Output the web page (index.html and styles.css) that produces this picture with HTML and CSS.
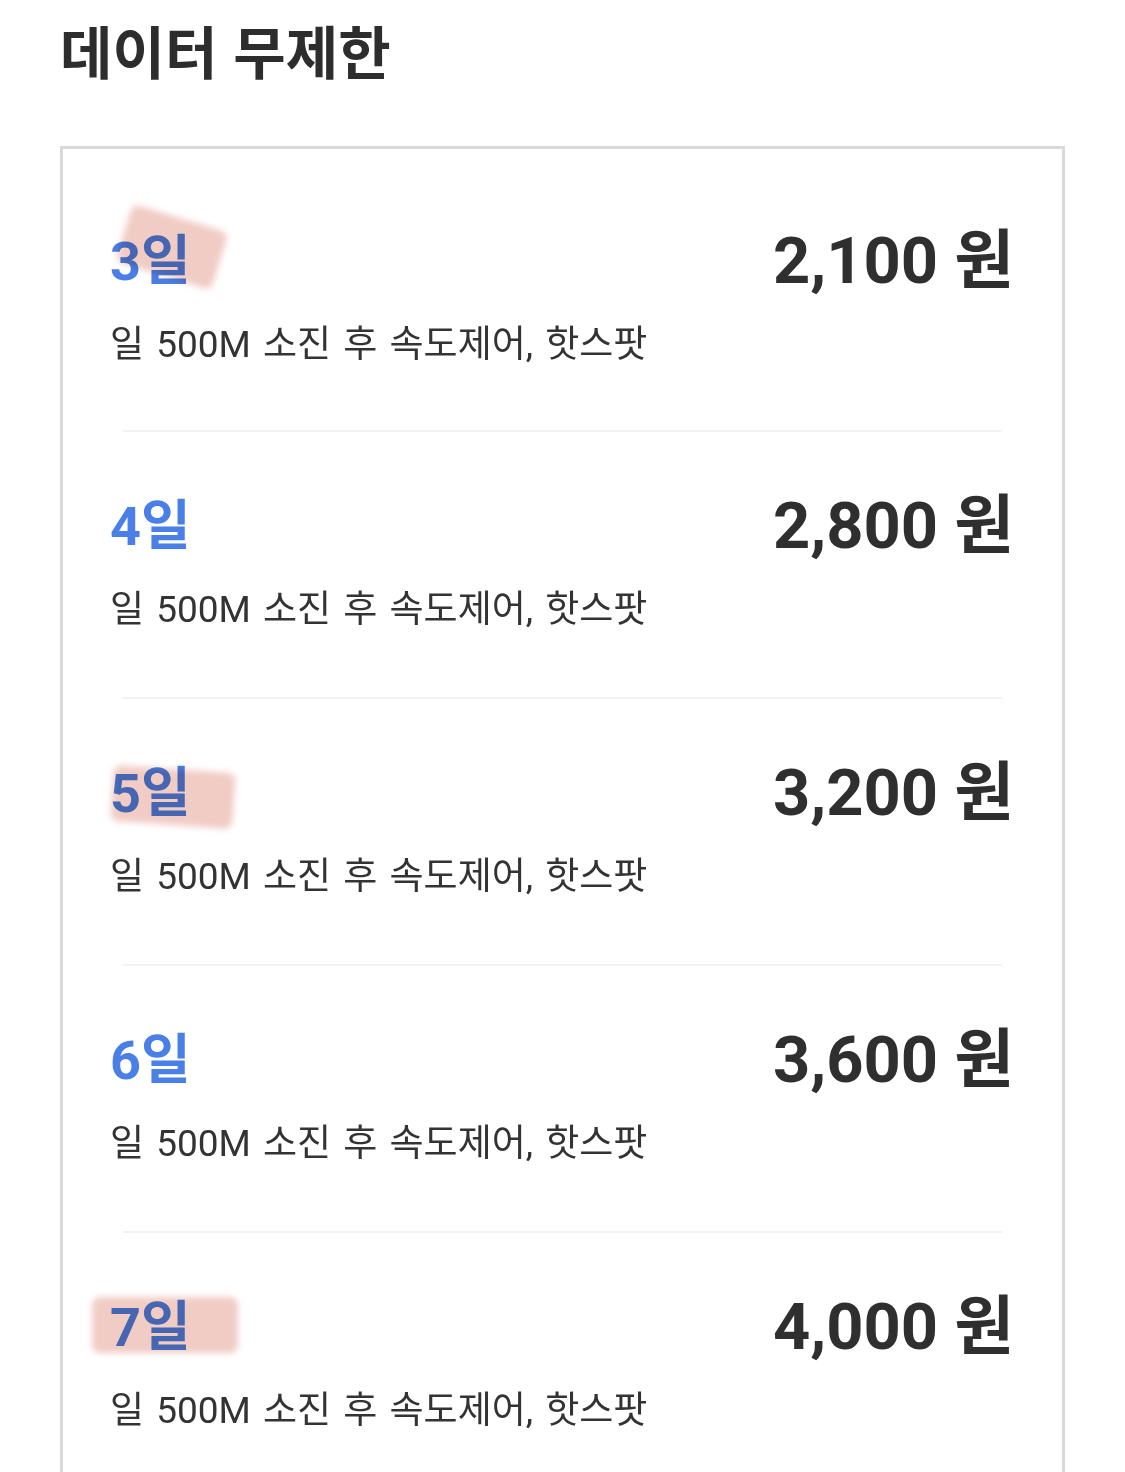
FILE: index.html
```html
<!DOCTYPE html>
<html lang="ko">
<head>
<meta charset="utf-8">
<link rel="stylesheet" href="styles.css">
</head>
<body>
<h1 class="title">데이터 무제한</h1>
<div class="card">
  <div class="row">
    <div class="head">
      <span class="day">3일<span class="mark mark-a"></span></span>
      <span class="price">2,100 원</span>
    </div>
    <p class="desc">일 500M 소진 후 속도제어, 핫스팟</p>
  </div>
  <div class="row">
    <div class="head">
      <span class="day">4일</span>
      <span class="price">2,800 원</span>
    </div>
    <p class="desc">일 500M 소진 후 속도제어, 핫스팟</p>
  </div>
  <div class="row">
    <div class="head">
      <span class="day">5일<span class="mark mark-b"></span></span>
      <span class="price">3,200 원</span>
    </div>
    <p class="desc">일 500M 소진 후 속도제어, 핫스팟</p>
  </div>
  <div class="row">
    <div class="head">
      <span class="day">6일</span>
      <span class="price">3,600 원</span>
    </div>
    <p class="desc">일 500M 소진 후 속도제어, 핫스팟</p>
  </div>
  <div class="row">
    <div class="head">
      <span class="day">7일<span class="mark mark-c"></span></span>
      <span class="price">4,000 원</span>
    </div>
    <p class="desc">일 500M 소진 후 속도제어, 핫스팟</p>
  </div>
</div>
</body>
</html>
```

FILE: styles.css
```css
html, body {
  margin: 0;
  padding: 0;
  background: #fff;
}
body {
  font-family: Roboto, "Noto Sans CJK KR", sans-serif;
  color: #333;
  overflow: hidden;
  height: 1472px;
}
.title {
  margin: 0;
  padding: 14px 0 0 60px;
  font-family: "Noto Sans CJK KR", sans-serif;
  font-weight: 700;
  font-size: 57px;
  line-height: 70px;
  color: #2d2d2d;
  height: 146px;
  box-sizing: border-box;
}
.card {
  margin-left: 60px;
  width: 1005px;
  box-sizing: border-box;
  border: 3px solid #d9d9d9;
  border-bottom: none;
  padding-top: 18px;
  height: 1326px;
  overflow: hidden;
}
.row {
  margin: 0 60px;
  border-bottom: 2px solid #f2f2f2;
  height: 267px;
  box-sizing: border-box;
  padding-top: 62px;
}
.row:first-child {
  height: 265px;
}
.row:last-child {
  border-bottom: none;
}
.head {
  display: flex;
  justify-content: space-between;
  align-items: center;
  height: 65px;
  margin: 0 -12px 0 -13px;
}
.day {
  position: relative;
  font-weight: 700;
  font-size: 54px;
  line-height: 65px;
  color: #4a7fe7;
}
.price {
  font-weight: 700;
  font-size: 65px;
  line-height: 65px;
  color: #2f2f2f;
}
.desc {
  margin: 30px -13px 0;
  font-size: 37px;
  line-height: 42px;
  word-spacing: 3px;
  color: #333;
}
.mark {
  position: absolute;
  background: rgba(232, 170, 158, 0.6);
  mix-blend-mode: multiply;
  filter: blur(3px);
  border-radius: 8px;
}
.mark-a {
  left: 12px;
  top: -12px;
  width: 100px;
  height: 60px;
  transform: rotate(17deg);
}
.mark-b {
  left: 2px;
  top: 8px;
  width: 122px;
  height: 56px;
  transform: rotate(4deg);
}
.mark-c {
  left: -18px;
  top: 2px;
  width: 146px;
  height: 56px;
}
```
